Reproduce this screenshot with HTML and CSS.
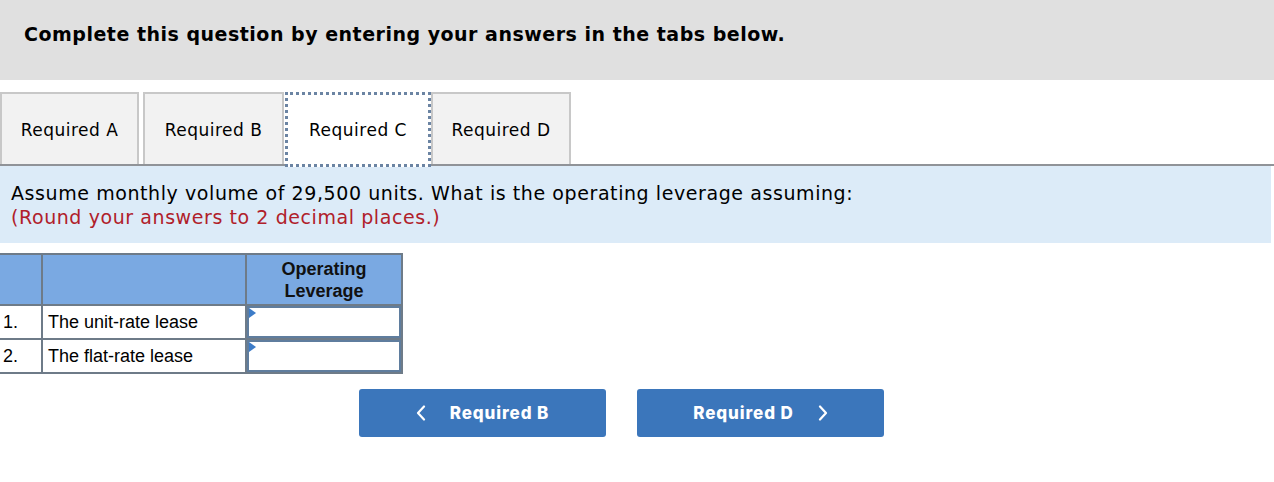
FILE: index.html
```html
<!DOCTYPE html>
<html>
<head>
<meta charset="utf-8">
<link rel="stylesheet" href="styles.css">
</head>
<body>
<div class="header">
  <h1 class="title">Complete this question by entering your answers in the tabs below.</h1>
</div>
<div class="tabs">
  <div class="tab">Required A</div>
  <div class="tab">Required B</div>
  <div class="tab active">Required C</div>
  <div class="tab">Required D</div>
</div>
<div class="prompt">
  <div class="q">Assume monthly volume of 29,500 units. What is the operating leverage assuming:</div>
  <div class="note">(Round your answers to 2 decimal places.)</div>
</div>
<table class="grid">
  <tr class="head">
    <th class="c1"></th>
    <th class="c2"></th>
    <th class="c3">Operating<br>Leverage</th>
  </tr>
  <tr>
    <td class="c1">1.</td>
    <td class="c2">The unit-rate lease</td>
    <td class="c3 inp"><div class="box"><span class="flag"></span></div></td>
  </tr>
  <tr>
    <td class="c1">2.</td>
    <td class="c2">The flat-rate lease</td>
    <td class="c3 inp"><div class="box"><span class="flag"></span></div></td>
  </tr>
</table>
<div class="nav">
  <button class="btn"><svg class="chev" width="10" height="16" viewBox="0 0 10 16"><path d="M8 1.5 L2 8 L8 14.5" fill="none" stroke="#fff" stroke-width="2.2" stroke-linecap="round" stroke-linejoin="round"/></svg><span>Required B</span></button>
  <button class="btn"><span>Required D</span><svg class="chev" width="10" height="16" viewBox="0 0 10 16"><path d="M2 1.5 L8 8 L2 14.5" fill="none" stroke="#fff" stroke-width="2.2" stroke-linecap="round" stroke-linejoin="round"/></svg></button>
</div>
</body>
</html>
```
FILE: styles.css
```css
html, body {
  margin: 0;
  padding: 0;
  background: #fff;
  font-family: "DejaVu Sans", Verdana, sans-serif;
  color: #000;
}
.header {
  background: #e0e0e0;
  height: 80px;
  display: flex;
  align-items: center;
  padding-left: 24px;
  padding-bottom: 12px;
  box-sizing: border-box;
}
.title {
  margin: 0;
  font-size: 19px;
  font-weight: bold;
  letter-spacing: 0.5px;
}
.tabs {
  display: flex;
  margin-top: 12px;
  height: 72px;
  border-bottom: 2px solid #909398;
}
.tab {
  box-sizing: border-box;
  height: 72px;
  background: #f2f2f2;
  border: 2px solid #c8c8c8;
  border-bottom: none;
  display: flex;
  align-items: center;
  justify-content: center;
  font-size: 17px;
  letter-spacing: 0.5px;
  padding-top: 1px;
}
.tab:nth-child(1) { width: 139px; margin-right: 4px; }
.tab:nth-child(2) { width: 141px; margin-right: 1px; }
.tab:nth-child(3) { width: 146px; }
.tab:nth-child(4) { width: 140px; }
.tab.active {
  background: #fff;
  border: 3px dotted #6b84a3;
  height: 75px;
  padding-top: 0;
}
.prompt {
  background: #dcebf8;
  width: 1271px;
  height: 77px;
  box-sizing: border-box;
  padding: 15px 0 0 11px;
  font-size: 19px;
  letter-spacing: 0.58px;
  line-height: 24px;
}
.note { color: #b0202a; }
.grid {
  margin-top: 10px;
  border-collapse: collapse;
  font-family: "Liberation Sans", Arial, sans-serif;
  font-size: 18px;
}
.grid th, .grid td {
  border: 2px solid #6e7b88;
  padding: 0;
  box-sizing: border-box;
}
.grid .head th {
  background: #7aa9e2;
  height: 51px;
  font-weight: bold;
  line-height: 22px;
  color: #111;
}
.grid .c1 { width: 42px; padding-left: 3px; text-align: left; border-left: none; }
.grid .c2 { width: 204px; padding-left: 5px; text-align: left; }
.grid .c3 { width: 156px; }
.grid td { height: 34px; }
.grid td.inp { padding: 0; }
.box {
  position: relative;
  height: 32px;
  border: 2px solid #5f7d9e;
  box-sizing: border-box;
  background: #fff;
}
.flag {
  position: absolute;
  left: 0;
  top: 0;
  width: 0;
  height: 0;
  border-top: 5px solid transparent;
  border-bottom: 5px solid transparent;
  border-left: 7px solid #3d7cc8;
}
.nav {
  display: flex;
  gap: 31px;
  margin-top: 15px;
  padding-left: 359px;
}
.btn {
  width: 247px;
  height: 48px;
  background: #3b76bb;
  border: none;
  border-radius: 3px;
  color: #fff;
  font-family: Inter, "Noto Sans", sans-serif;
  font-weight: 800;
  font-size: 17px;
  letter-spacing: 0.9px;
  display: flex;
  align-items: center;
  justify-content: center;
  gap: 24px;
  padding: 0;
}
.chev { display: block; }
```
